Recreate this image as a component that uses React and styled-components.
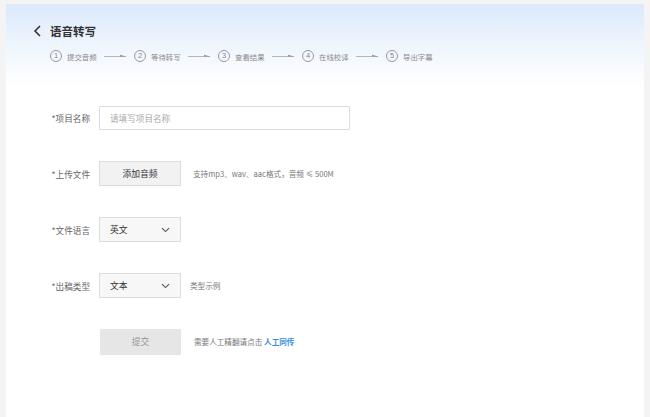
import React from 'react';
import styled, { createGlobalStyle } from 'styled-components';

const GlobalStyle = createGlobalStyle`
  html, body {
    margin: 0;
    padding: 0;
    background: #f4f4f4;
    font-family: "Noto Sans CJK SC", "Liberation Sans", sans-serif;
  }
`;

const steps = ['提交音频', '等待转写', '查看结果', '在线校译', '导出字幕'];

const Arrow = () => (
  <svg width="23" height="6" viewBox="0 0 23 6">
    <line x1="0" y1="3.5" x2="22" y2="3.5" stroke="#999" strokeWidth="0.7" />
    <path d="M16 1.8 L22.5 3.5 L16 3.8 Z" fill="#999" />
  </svg>
);

const Chevron = () => (
  <svg width="9" height="8" viewBox="0 0 9 8">
    <path d="M1 2.2 L4.5 5.6 L8 2.2" fill="none" stroke="#555" strokeWidth="1.1" />
  </svg>
);

const App = () => {
  return (
    <Page>
      <GlobalStyle />
      <Card>
        <Header>
          <TitleRow>
            <svg width="9" height="12" viewBox="0 0 9 12">
              <path d="M7 1 L2 6 L7 11" fill="none" stroke="#333" strokeWidth="1.6" />
            </svg>
            <Title>语音转写</Title>
          </TitleRow>
          <Steps>
            {steps.map((s, i) => (
              <Step key={s}>
                <Num>{i + 1}</Num>
                <StepText>{s}</StepText>
                {i < steps.length - 1 && <Arrow />}
              </Step>
            ))}
          </Steps>
        </Header>

        <Form>
          <Row>
            <Label>*项目名称</Label>
            <Input placeholder="请填写项目名称" />
          </Row>
          <Row>
            <Label>*上传文件</Label>
            <Button>添加音频</Button>
            <Hint>支持mp3、wav、aac格式，音频 ≤ 500M</Hint>
          </Row>
          <Row>
            <Label>*文件语言</Label>
            <Select>
              <span>英文</span>
              <Chevron />
            </Select>
          </Row>
          <Row>
            <Label>*出稿类型</Label>
            <Select>
              <span>文本</span>
              <Chevron />
            </Select>
            <Hint $near>类型示例</Hint>
          </Row>
          <Row>
            <Label />
            <Submit>提交</Submit>
            <Hint $wide>
              需要人工精翻请点击 <Link>人工同传</Link>
            </Hint>
          </Row>
        </Form>
      </Card>
    </Page>
  );
};

export default App;

const Page = styled.div`
  padding: 4px 6px 0 6px;
  height: 413px;
  overflow: hidden;
`;

const Card = styled.div`
  background: #fff;
  height: 100%;
`;

const Header = styled.div`
  height: 82px;
  padding: 20px 0 0 27px;
  box-sizing: border-box;
  background: linear-gradient(180deg, #dbe9fb 0%, #eef5fd 50%, #ffffff 100%);
`;

const TitleRow = styled.div`
  display: flex;
  align-items: center;
  gap: 8px;
  height: 14px;
`;

const Title = styled.h1`
  margin: 0;
  font-size: 11.5px;
  font-weight: 700;
  color: #333;
  line-height: 14px;
`;

const Steps = styled.div`
  display: flex;
  align-items: center;
  margin: 12px 0 0 17px;
`;

const Step = styled.div`
  display: flex;
  align-items: center;
  width: 84px;
  color: #8a8a8a;
`;

const Num = styled.span`
  width: 10px;
  height: 10px;
  border: 0.8px solid #999;
  border-radius: 50%;
  font-size: 7.5px;
  line-height: 10px;
  text-align: center;
  font-family: "Liberation Sans", sans-serif;
  color: #888;
`;

const StepText = styled.span`
  font-size: 7.4px;
  margin: 0 7px 0 5px;
  white-space: nowrap;
`;

const Form = styled.div`
  display: flex;
  flex-direction: column;
  gap: 31px;
  padding-top: 19px;
`;

const Row = styled.div`
  display: flex;
  align-items: center;
  height: 25px;
`;

const Label = styled.div`
  width: 84px;
  padding-right: 9px;
  text-align: right;
  font-size: 8.6px;
  color: #666;
  white-space: nowrap;
`;

const Input = styled.input`
  width: 251px;
  height: 24px;
  box-sizing: border-box;
  border: 1px solid #dcdcdc;
  border-radius: 1px;
  padding: 0 10px;
  font-size: 8.6px;
  font-family: inherit;
  outline: none;
  &::placeholder {
    color: #aaa;
  }
`;

const Button = styled.div`
  width: 82px;
  height: 25px;
  box-sizing: border-box;
  display: flex;
  align-items: center;
  justify-content: center;
  background: #f2f2f2;
  border: 1px solid #dcdcdc;
  font-size: 8.8px;
  color: #333;
`;

const Select = styled.div`
  width: 82px;
  height: 25px;
  box-sizing: border-box;
  display: flex;
  align-items: center;
  justify-content: space-between;
  padding: 0 10px 0 10px;
  background: #f7f7f7;
  border: 1px solid #dcdcdc;
  font-size: 8.8px;
  color: #333;
`;

const Submit = styled.div`
  width: 81px;
  height: 26px;
  margin-left: 1px;
  display: flex;
  align-items: center;
  justify-content: center;
  background: #e6e6e6;
  border-radius: 1px;
  font-size: 8.8px;
  color: #999;
`;

const Hint = styled.div`
  margin-left: ${p => (p.$near ? '9px' : p.$wide ? '13px' : '12px')};
  font-size: 7.6px;
  color: #777;
  white-space: nowrap;
`;

const Link = styled.span`
  color: #3a8ee6;
  font-weight: 700;
`;
